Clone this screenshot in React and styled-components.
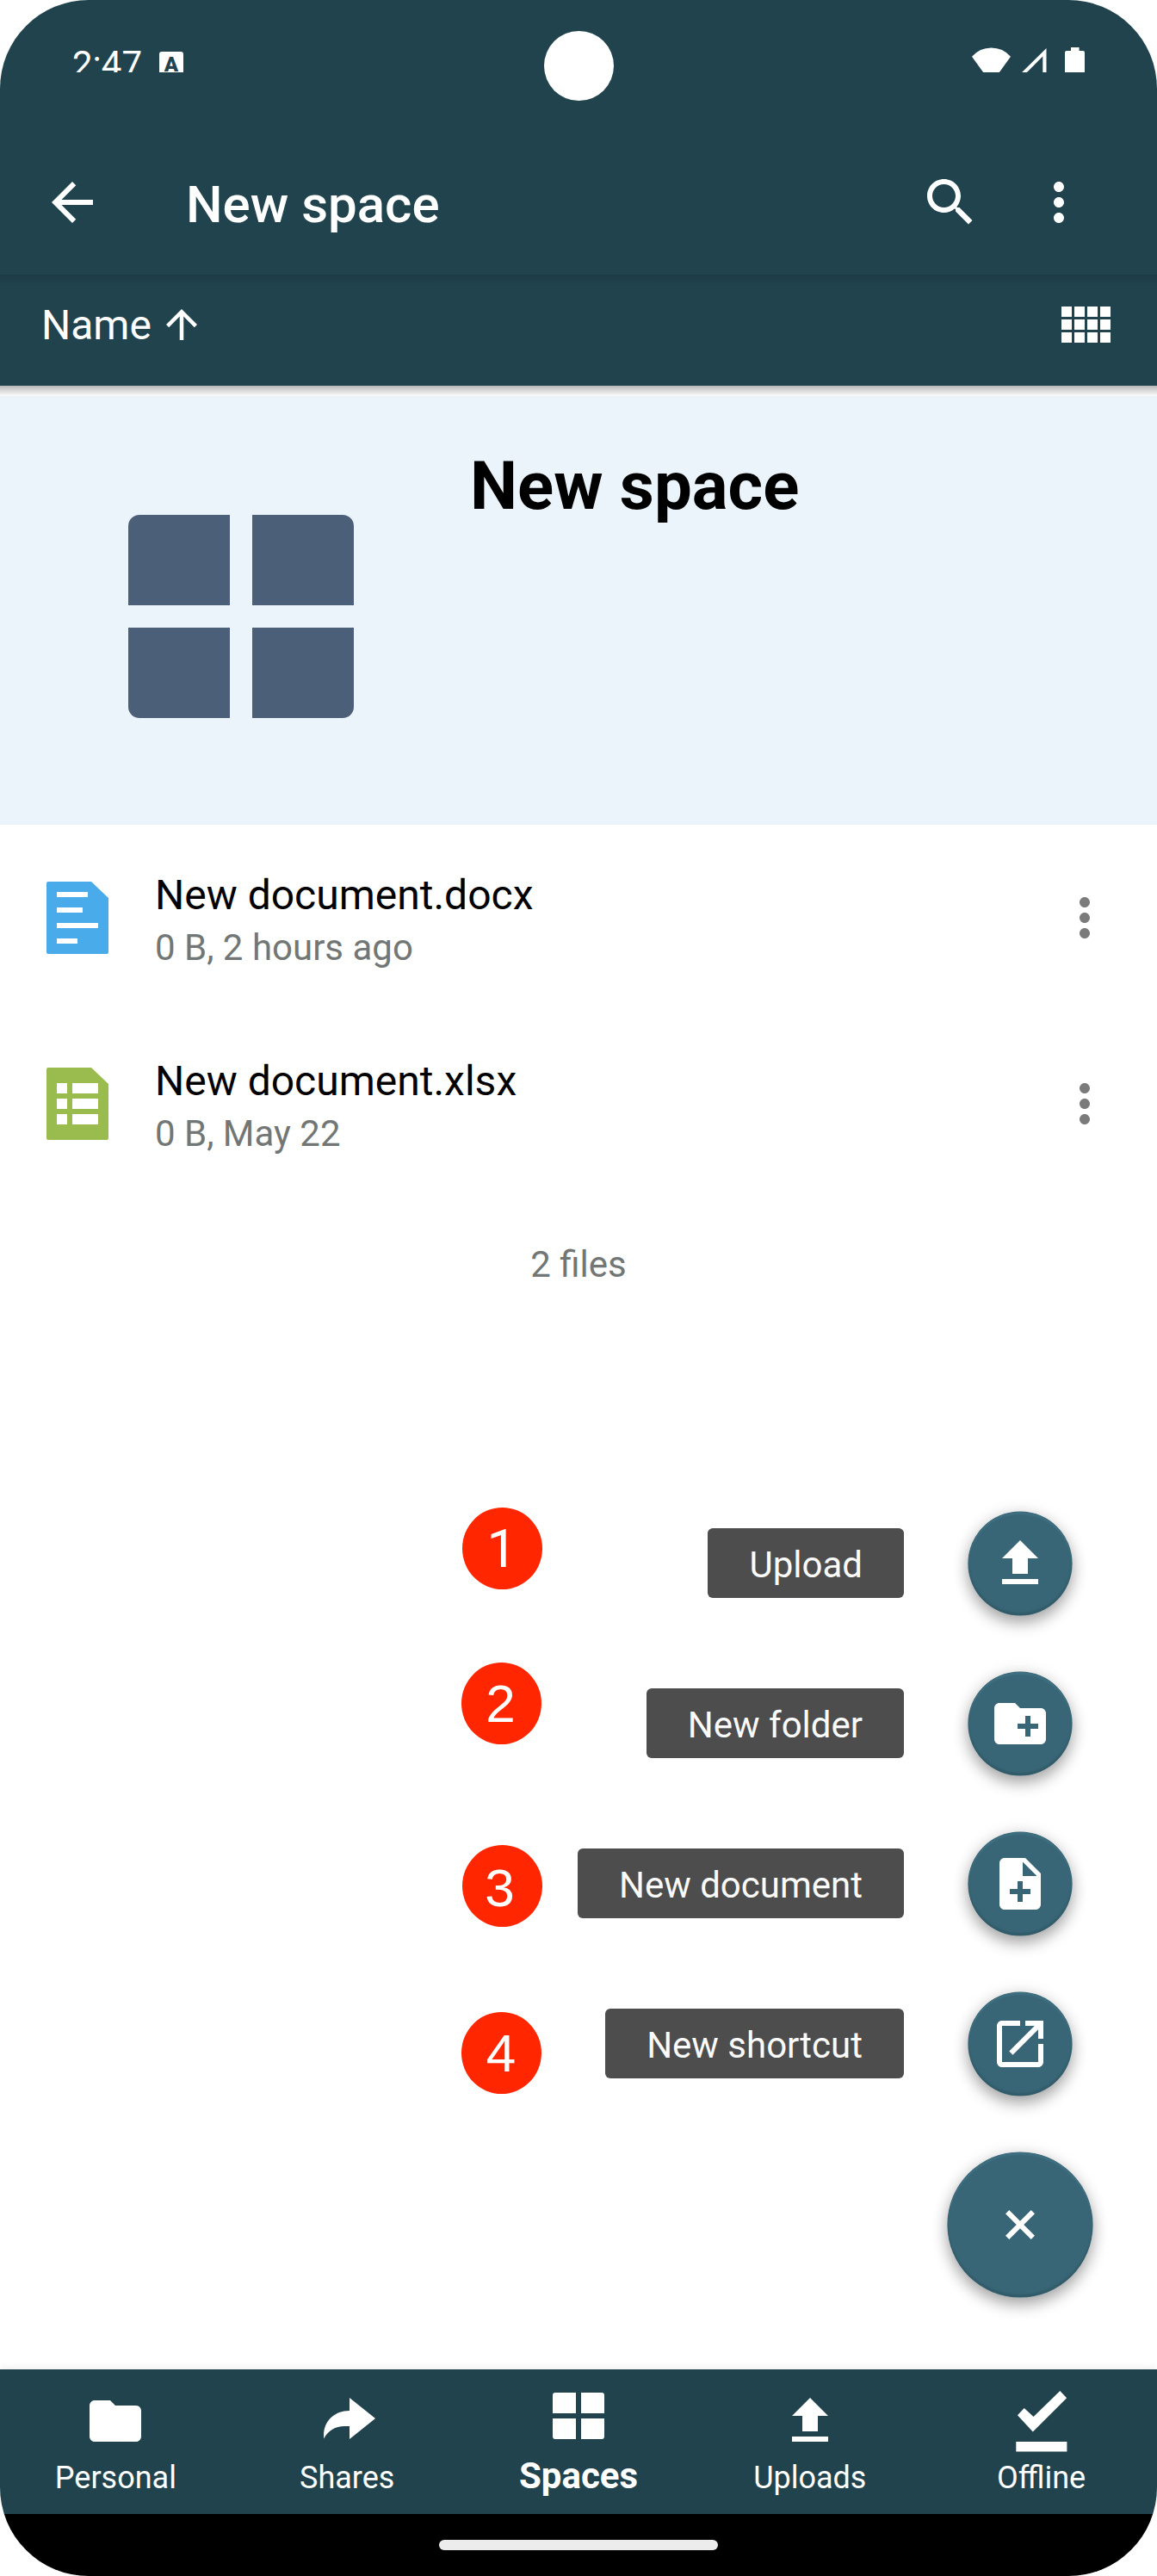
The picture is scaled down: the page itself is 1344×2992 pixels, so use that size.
import React from "react";
import styled, { createGlobalStyle } from "styled-components";

const GlobalStyle = createGlobalStyle`
  html, body {
    margin: 0;
    padding: 0;
    background: #fff;
  }
  *, *::before, *::after {
    box-sizing: border-box;
  }
`;

const colors = {
  primary: "#21434e",
  accent: "#396676",
  header: "#ebf3fb",
  tile: "#4c5f79",
  muted: "#727776",
  label: "#4d4d4d",
  badge: "#ff2600",
};

const Screen = styled.div`
  position: relative;
  display: flex;
  flex-direction: column;
  width: 1344px;
  height: 2992px;
  overflow: hidden;
  border-radius: 103px;
  background: #fff;
  font-family: Roboto, "Noto Sans", sans-serif;
  color: #000;
`;

const StatusBar = styled.div`
  flex: none;
  height: 151px;
  background: ${colors.primary};
`;

const StatusClip = styled.div`
  display: flex;
  align-items: flex-start;
  height: 84px;
  overflow: hidden;
  padding: 50px 84px 0 84px;
  color: #fff;
`;

const Clock = styled.span`
  width: 101px;
  font-size: 42px;
  line-height: 50px;
`;

const LetterBadge = styled.span`
  width: 28px;
  height: 28px;
  margin-top: 10px;
  border-radius: 3px;
  background: #fff;
  color: ${colors.primary};
  font-size: 24px;
  font-weight: 900;
  line-height: 30px;
  text-align: center;
`;

const StatusIcons = styled.svg`
  display: block;
  width: 136px;
  height: 34px;
  margin-left: auto;
`;

const Camera = styled.div`
  position: absolute;
  top: 36px;
  left: 632px;
  width: 81px;
  height: 81px;
  border-radius: 50%;
  background: #fff;
`;

const AppBar = styled.header`
  flex: none;
  display: flex;
  align-items: center;
  height: 168px;
  padding: 0 78px 0 48px;
  background: ${colors.primary};
  color: #fff;
  gap: 54px;
`;

const AppTitle = styled.h1`
  flex: 1;
  margin: 0;
  padding: 5px 0 0 42px;
  font-size: 60px;
  font-weight: 500;
  line-height: 72px;
`;

const Icon = styled.svg`
  display: block;
  flex: none;
  width: ${(p) => p.$size || 72}px;
  height: ${(p) => p.$size || 72}px;
  fill: currentColor;
`;

const SortBar = styled.div`
  flex: none;
  display: flex;
  align-items: center;
  height: 129px;
  padding: 0 48px 14px 48px;
  background: linear-gradient(#1d3b46, ${colors.primary} 13px);
  color: #fff;
`;

const SortLabel = styled.span`
  width: 136px;
  padding-top: 2px;
  font-size: 48px;
  line-height: 56px;
`;

const Spacer = styled.div`
  flex: 1;
`;

const BarShadow = styled.div`
  flex: none;
  height: 12px;
  background: linear-gradient(#b9b9b9, #dedede 55%, #fcfcfc);
`;

const SpaceHeader = styled.section`
  flex: none;
  display: flex;
  align-items: flex-start;
  height: 498px;
  padding: 58px 0 0 149px;
  background: ${colors.header};
`;

const Tiles = styled.div`
  display: grid;
  grid-template-columns: 118px 118px;
  grid-template-rows: 105px 105px;
  gap: 26px;
  width: 262px;
  height: 236px;
  margin-top: 80px;
  border-radius: 13px;
  overflow: hidden;
`;

const Tile = styled.div`
  background: ${colors.tile};
`;

const SpaceTitle = styled.h2`
  margin: 0 0 0 135px;
  font-size: 78px;
  font-weight: 700;
  line-height: 93px;
`;

const FileRow = styled.div`
  flex: none;
  display: flex;
  align-items: center;
  height: 216px;
  padding: 0 48px 0 54px;
`;

const FileGlyph = styled.svg`
  display: block;
  flex: none;
  width: 72px;
  height: 84px;
`;

const FileText = styled.div`
  flex: 1;
  padding: 6px 0 0 54px;
`;

const FileName = styled.div`
  font-size: 48px;
  line-height: 56px;
  color: #000;
`;

const FileMeta = styled.div`
  padding-top: 8px;
  font-size: 42px;
  line-height: 50px;
  color: ${colors.muted};
`;

const RowMenu = styled.div`
  color: #7b7b7b;
`;

const Summary = styled.div`
  flex: 1;
  padding-top: 54px;
  text-align: center;
  font-size: 42px;
  line-height: 50px;
  color: ${colors.muted};
`;

const SpeedDial = styled.div`
  position: absolute;
  top: 1756px;
  right: 75px;
  display: flex;
  flex-direction: column;
  align-items: flex-end;
  gap: 66px;
`;

const DialItem = styled.div`
  display: flex;
  align-items: center;
  gap: 75px;
  padding-right: 24px;
`;

const DialLabel = styled.span`
  height: 81px;
  margin-top: -1px;
  padding: 3px 48px 0;
  border-radius: 6px;
  background: ${colors.label};
  color: #fafafa;
  font-size: 42px;
  line-height: 80px;
  white-space: nowrap;
`;

const Fab = styled.div`
  display: flex;
  align-items: center;
  justify-content: center;
  width: ${(p) => p.$size}px;
  height: ${(p) => p.$size}px;
  border-radius: 50%;
  background: ${colors.accent};
  color: #fff;
  box-shadow:
    inset 0 3px 1px #3e6f80,
    inset 0 -3px 2px #325b69,
    0 0 0 0.6px ${colors.accent},
    0 9px 18px rgba(0, 0, 0, 0.31),
    0 1px 20px rgba(0, 0, 0, 0.12);
`;

const Badge = styled.span`
  position: absolute;
  top: ${(p) => p.$y}px;
  left: ${(p) => p.$x}px;
  width: 93px;
  height: 95px;
  padding-top: ${(p) => p.$drop || 0}px;
  padding-right: ${(p) => p.$inset || 0}px;
  border-radius: 50%;
  background: ${colors.badge};
  color: #fff;
  font-family: ${(p) => (p.$plain ? "Roboto" : '"Liberation Sans"')}, Arial, sans-serif;
  font-size: 62px;
  line-height: 95px;
  text-align: center;
`;

const BottomNav = styled.nav`
  flex: none;
  display: flex;
  height: 168px;
  background: ${colors.primary};
  box-shadow: 0 -2px 8px rgba(0, 0, 0, 0.07);
`;

const Tab = styled.div`
  flex: 1;
  display: flex;
  flex-direction: column;
  align-items: center;
  padding-top: ${(p) => (p.$active ? 18 : 24)}px;
  color: #fff;
  font-size: ${(p) => (p.$active ? 42 : 36)}px;
  font-weight: ${(p) => (p.$active ? 700 : 400)};
  line-height: ${(p) => (p.$active ? 68 : 60)}px;
`;

const GestureBar = styled.div`
  flex: none;
  display: flex;
  justify-content: center;
  height: 72px;
  padding-top: 30px;
  background: #000;
`;

const GesturePill = styled.div`
  width: 324px;
  height: 12px;
  border-radius: 6px;
  background: #ececec;
`;

const paths = {
  back: "M20 11H7.83l5.59-5.59L12 4l-8 8 8 8 1.41-1.41L7.83 13H20v-2z",
  up: "M4 12l1.41 1.41L11 7.83V20h2V7.83l5.58 5.59L20 12l-8-8-8 8z",
  search:
    "M15.5 14h-.79l-.28-.27C15.41 12.59 16 11.11 16 9.5 16 5.91 13.09 3 9.5 3S3 5.91 3 9.5 5.91 16 9.5 16c1.61 0 3.09-.59 4.23-1.57l.27.28v.79l5 4.99L20.49 19l-4.99-5zm-6 0C7.01 14 5 11.99 5 9.5S7.01 5 9.5 5 14 7.01 14 9.5 11.99 14 9.5 14z",
  more: "M12 8c1.1 0 2-.9 2-2s-.9-2-2-2-2 .9-2 2 .9 2 2 2zm0 2c-1.1 0-2 .9-2 2s.9 2 2 2 2-.9 2-2-.9-2-2-2zm0 6c-1.1 0-2 .9-2 2s.9 2 2 2 2-.9 2-2-.9-2-2-2z",
  comfy:
    "M3 9h4V5H3v4zm0 5h4v-4H3v4zm5 0h4v-4H8v4zm5 0h4v-4h-4v4zM8 9h4V5H8v4zm5-4v4h4V5h-4zm5 9h4v-4h-4v4zM3 19h4v-4H3v4zm5 0h4v-4H8v4zm5 0h4v-4h-4v4zm5 0h4v-4h-4v4zm0-14v4h4V5h-4z",
  upload: "M9 16h6v-6h4l-7-7-7 7h4v6zm-4 2h14v2H5v-2z",
  newFolder:
    "M20 6h-8l-2-2H4c-1.11 0-1.99.89-1.99 2L2 18c0 1.11.89 2 2 2h16c1.11 0 2-.89 2-2V8c0-1.11-.89-2-2-2zm-1 8h-3v3h-2v-3h-3v-2h3V9h2v3h3v2z",
  newDocument:
    "M14 2H6c-1.1 0-1.99.9-1.99 2L4 20c0 1.1.89 2 1.99 2H18c1.1 0 2-.9 2-2V8l-6-6zm2 14h-3v3h-2v-3H8v-2h3v-3h2v3h3v2zm-3-7V3.5L18.5 9H13z",
  shortcut:
    "M19 19H5V5h7V3H5c-1.11 0-2 .9-2 2v14c0 1.1.89 2 2 2h14c1.1 0 2-.9 2-2v-7h-2v7zM14 3v2h3.59l-9.83 9.83 1.41 1.41L19 6.41V10h2V3h-7z",
  folder:
    "M10 4H4c-1.1 0-1.99.9-1.99 2L2 18c0 1.1.9 2 2 2h16c1.1 0 2-.9 2-2V8c0-1.1-.9-2-2-2h-8l-2-2z",
  share: "M13 3l10 8-10 8v-5H11C7.6 14 4.7 15.7 3.1 18.8 2.4 12.6 6.8 8 13 8V3z",
  spaces:
    "M3 3h8v8H2V4a1 1 0 0 1 1-1zM13 3h8a1 1 0 0 1 1 1v7h-9V3zM2 13h9v8H3a1 1 0 0 1-1-1v-7zM13 13h9v7a1 1 0 0 1-1 1h-8v-8z",
  offline:
    "M19.1.35L21.7 3.1 8.6 16.2 2.65 9.75 5.25 7 8.85 10.35zM2.1 20h19.7v3.85H2.1z",
};

const Glyph = ({ name, size }) => (
  <Icon $size={size} viewBox="0 0 24 24" aria-hidden="true">
    <path d={paths[name]} />
  </Icon>
);

const files = [
  { name: "New document.docx", meta: "0 B, 2 hours ago", kind: "doc" },
  { name: "New document.xlsx", meta: "0 B, May 22", kind: "sheet" },
];

const actions = [
  { label: "Upload", icon: "upload" },
  { label: "New folder", icon: "newFolder" },
  { label: "New document", icon: "newDocument" },
  { label: "New shortcut", icon: "shortcut" },
];

const tabs = [
  { label: "Personal", icon: "folder" },
  { label: "Shares", icon: "share" },
  { label: "Spaces", icon: "spaces", active: true },
  { label: "Uploads", icon: "upload" },
  { label: "Offline", icon: "offline" },
];

const badges = [
  { n: 1, x: 536.5, y: 1751, plain: true },
  { n: 2, x: 535.5, y: 1931, inset: 1 },
  { n: 3, x: 536.5, y: 2143, drop: 2, inset: 5 },
  { n: 4, x: 535.5, y: 2337 },
];

const FileIcon = ({ kind }) => (
  <FileGlyph viewBox="0 0 72 84" aria-hidden="true">
    <path
      d="M2 0H52L72 19V82a2 2 0 0 1-2 2H2a2 2 0 0 1-2-2V2a2 2 0 0 1 2-2z"
      fill={kind === "doc" ? "#4aabea" : "#9abc4f"}
    />
    {kind === "doc" ? (
      <path fill="#fff" d="M12 12h36v6H12zM12 30h30v6H12zM12 48h48v6H12zM12 66h24v6H12z" />
    ) : (
      <path
        fill="#fff"
        d="M12 18h12v12H12zM30 18h30v12H30zM12 36h12v12H12zM30 36h30v12H30zM12 54h12v12H12zM30 54h30v12H30z"
      />
    )}
  </FileGlyph>
);

export default function App() {
  return (
    <>
      <GlobalStyle />
      <Screen>
        <StatusBar>
          <StatusClip>
            <Clock>2:47</Clock>
            <LetterBadge>A</LetterBadge>
            <StatusIcons viewBox="1124 50 136 34" fill="#fff" aria-hidden="true">
              <path d="M1129 65.7Q1138 55.5 1151.5 55.5T1174 65.7L1151.5 97z" />
              <path
                fillRule="evenodd"
                d="M1215.5 56V90H1181zM1211.3 65.5L1187 90H1211.3z"
              />
              <path d="M1244 55h9.6v4h4.4a2 2 0 0 1 2 2v30h-23V61a2 2 0 0 1 2-2h5z" />
            </StatusIcons>
          </StatusClip>
        </StatusBar>
        <Camera />
        <AppBar>
          <Glyph name="back" />
          <AppTitle>New space</AppTitle>
          <Glyph name="search" />
          <Glyph name="more" />
        </AppBar>
        <SortBar>
          <SortLabel>Name</SortLabel>
          <Glyph name="up" size={54} />
          <Spacer />
          <Glyph name="comfy" />
        </SortBar>
        <BarShadow />
        <SpaceHeader>
          <Tiles>
            <Tile />
            <Tile />
            <Tile />
            <Tile />
          </Tiles>
          <SpaceTitle>New space</SpaceTitle>
        </SpaceHeader>
        {files.map((f) => (
          <FileRow key={f.name}>
            <FileIcon kind={f.kind} />
            <FileText>
              <FileName>{f.name}</FileName>
              <FileMeta>{f.meta}</FileMeta>
            </FileText>
            <RowMenu>
              <Glyph name="more" />
            </RowMenu>
          </FileRow>
        ))}
        <Summary>2 files</Summary>
        <BottomNav>
          {tabs.map((t) => (
            <Tab key={t.label} $active={t.active}>
              <Glyph name={t.icon} />
              {t.label}
            </Tab>
          ))}
        </BottomNav>
        <GestureBar>
          <GesturePill />
        </GestureBar>
        <SpeedDial>
          {actions.map((a) => (
            <DialItem key={a.label}>
              <DialLabel>{a.label}</DialLabel>
              <Fab $size={120}>
                <Glyph name={a.icon} />
              </Fab>
            </DialItem>
          ))}
          <Fab $size={168}>
            <Icon viewBox="0 0 24 24" aria-hidden="true">
              <path d="M19 13h-6v6h-2v-6H5v-2h6V5h2v6h6v2z" transform="rotate(45 12 12)" />
            </Icon>
          </Fab>
        </SpeedDial>
        {badges.map((b) => (
          <Badge key={b.n} $x={b.x} $y={b.y} $drop={b.drop} $inset={b.inset} $plain={b.plain}>
            {b.n}
          </Badge>
        ))}
      </Screen>
    </>
  );
}
